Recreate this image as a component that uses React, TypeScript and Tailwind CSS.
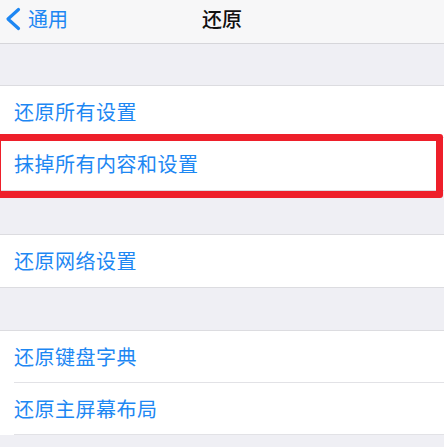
import React from 'react';

const font = { fontFamily: '"Noto Sans CJK SC", "Noto Sans", sans-serif' };

const Row: React.FC<{ label: string; last?: boolean }> = ({ label, last }) => (
  <div className="bg-white pl-[14px]">
    <div className={`h-[52px] flex items-center ${last ? '' : 'border-b border-[#e2e2e6]'}`}>
      <span className="text-[20px] text-[#1d87f3] leading-none tracking-[0.5px]">{label}</span>
    </div>
  </div>
);

const Group: React.FC<{ items: string[]; insetEnd?: boolean }> = ({ items, insetEnd }) => (
  <div className={`border-t border-[#dcdce0] ${insetEnd ? '' : 'border-b'}`}>
    {items.map((item, i) => (
      <Row key={item} label={item} last={!insetEnd && i === items.length - 1} />
    ))}
  </div>
);

export default function App() {
  return (
    <div className="relative w-[444px] h-[447px] overflow-hidden bg-[#efeff4]" style={font}>
      {/* Nav bar */}
      <div className="h-[44px] bg-[#f7f7f8] border-b border-[#d6d6da]">
        <div className="relative h-[37px] flex items-center">
          <div className="flex items-center pl-[4px]">
            <svg width="18" height="24" viewBox="0 0 18 24" fill="none">
              <path d="M14.5 2.5 L4 12 L14.5 21.5" stroke="#1d87f3" strokeWidth="3.2" strokeLinecap="round" strokeLinejoin="round" />
            </svg>
            <span className="ml-[6px] text-[20px] text-[#1d87f3] leading-none">通用</span>
          </div>
          <div className="absolute inset-0 flex items-center justify-center">
            <span className="text-[20px] text-[#111] font-medium leading-none">还原</span>
          </div>
        </div>
      </div>

      <div className="h-[41px]" />
      <Group items={['还原所有设置', '抹掉所有内容和设置']} />

      <div className="h-[43px]" />
      <Group items={['还原网络设置']} />

      <div className="h-[42px]" />
      <Group items={['还原键盘字典', '还原主屏幕布局']} insetEnd />

      {/* Red highlight annotation */}
      <div className="absolute left-[-6px] top-[134px] w-[449px] h-[64px] border-[7px] border-[#ee1f2a] rounded-[3px] pointer-events-none" />
    </div>
  );
}
